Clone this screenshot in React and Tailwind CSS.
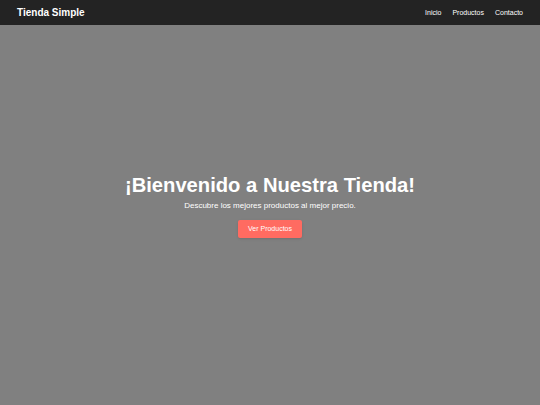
const NavLink = ({ children }) => (
  <a href="#" className="text-white text-[7px] leading-none">
    {children}
  </a>
);

export default function App() {
  return (
    <div className="min-h-screen flex flex-col bg-[#808080] font-['Liberation_Sans',Arial,sans-serif]">
      {/* Header */}
      <header className="h-[25px] bg-[#232323] flex items-center justify-between px-[17px]">
        <h1 className="text-white text-[10px] font-bold leading-none">Tienda Simple</h1>
        <nav className="flex items-center gap-[11px]">
          <NavLink>Inicio</NavLink>
          <NavLink>Productos</NavLink>
          <NavLink>Contacto</NavLink>
        </nav>
      </header>

      {/* Hero */}
      <section className="flex-1 flex flex-col items-center justify-center text-center pb-[17px]">
        <h2 className="text-white text-[20.2px] font-bold leading-none">¡Bienvenido a Nuestra Tienda!</h2>
        <p className="text-white text-[8px] mt-[7px] leading-none">
          Descubre los mejores productos al mejor precio.
        </p>
        <button className="mt-[10px] h-[18px] px-[10px] bg-[#ff6b61] text-white text-[7px] rounded-[2px] shadow-sm">
          Ver Productos
        </button>
      </section>
    </div>
  );
}
